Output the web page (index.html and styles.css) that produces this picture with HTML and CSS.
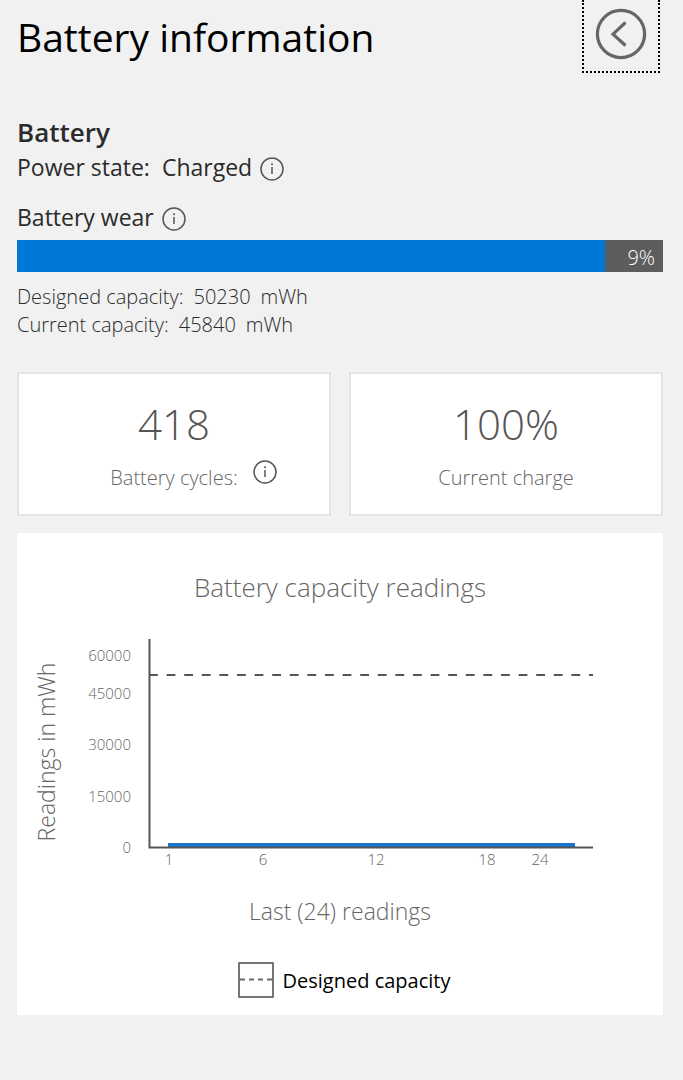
FILE: index.html
```html
<!DOCTYPE html>
<html lang="en">
<head>
<meta charset="utf-8">
<meta name="viewport" content="width=device-width, initial-scale=1">
<title>Battery information</title>
<link rel="stylesheet" href="styles.css">
</head>
<body>

<!-- info icon, used by every info button -->
<svg class="defs" width="0" height="0" aria-hidden="true">
  <symbol id="info" viewBox="0 0 24 24">
    <circle cx="12" cy="12" r="11" fill="none" stroke="currentColor" stroke-width="1.5"/>
    <path d="M12 10v7" stroke="currentColor" stroke-width="1.5"/>
    <circle cx="12" cy="7.3" r="1" fill="currentColor"/>
  </symbol>
</svg>

<header class="header">
  <h1>Battery information</h1>
  <button type="button" class="back" aria-label="Back">
    <svg width="52" height="52" viewBox="0 0 52 52" fill="none" stroke="#666" stroke-width="3.2">
      <circle cx="26" cy="26" r="23.6"/>
      <path d="M30.500 14.500L18 26.200L30.500 37.500"/>
    </svg>
  </button>
</header>

<main>
  <section class="battery">
    <h2>Battery</h2>
    <div class="row">
      <span>Power state:</span>
      <span class="value">Charged</span>
      <button type="button" class="info" aria-label="About power state"><svg><use href="#info"/></svg></button>
    </div>
    <div class="row wear">
      <span>Battery wear</span>
      <button type="button" class="info" aria-label="About battery wear"><svg><use href="#info"/></svg></button>
    </div>
    <div class="bar">
      <div class="fill" style="width:91%"></div>
      <span class="percent">9%</span>
    </div>
    <div class="capacity">
      <div><span>Designed capacity:</span><span>50230</span><span>mWh</span></div>
      <div><span>Current capacity:</span><span>45840</span><span>mWh</span></div>
    </div>
  </section>

  <section class="cards">
    <div class="card">
      <div class="number">418</div>
      <div class="label cycles">
        <span>Battery cycles:</span>
        <button type="button" class="info" aria-label="About battery cycles"><svg><use href="#info"/></svg></button>
      </div>
    </div>
    <div class="card">
      <div class="number">100%</div>
      <div class="label">Current charge</div>
    </div>
  </section>

  <section class="chart">
    <h3>Battery capacity readings</h3>
    <svg class="plot" viewBox="0 0 646 260">
      <text class="title" text-anchor="middle" transform="translate(38 132) rotate(-90)">Readings in mWh</text>

      <g class="tick" text-anchor="end">
        <text x="114" y="41">60000</text>
        <text x="114" y="79">45000</text>
        <text x="114" y="130">30000</text>
        <text x="114" y="182">15000</text>
        <text x="114" y="233">0</text>
      </g>

      <path class="designed" d="M132 55H576"/>
      <path class="readings" d="M151 225H558"/>
      <path class="axis" d="M132.500 19V227.500H576"/>

      <g class="tick" text-anchor="middle">
        <text x="152" y="245">1</text>
        <text x="246" y="245">6</text>
        <text x="359" y="245">12</text>
        <text x="470" y="245">18</text>
        <text x="523" y="245">24</text>
      </g>
    </svg>
    <p class="caption">Last (24) readings</p>
    <div class="legend">
      <svg width="36" height="36" viewBox="0 0 36 36" fill="none" stroke="#666">
        <rect x="1" y="1" width="34" height="34" stroke-width="1.8"/>
        <path d="M2 17.500H34" stroke-width="2" stroke-dasharray="5 4"/>
      </svg>
      <span>Designed capacity</span>
    </div>
  </section>
</main>

</body>
</html>
```
FILE: styles.css
```css
* {
  box-sizing: border-box;
}

body {
  margin: 0;
  padding: 0 20px 64px 17px;
  background: #f1f1f1;
  color: #2b2b2b;
  font-family: "Segoe UI", "Open Sans", "Noto Sans", sans-serif;
}

h1, h2, h3, p {
  margin: 0;
}

button {
  padding: 0;
  border: none;
  background: none;
  cursor: pointer;
}

.defs {
  position: absolute;
}

/* Header */
.header {
  display: flex;
  justify-content: space-between;
  padding-right: 3px;
}

h1 {
  color: #000;
  font-size: 39px;
  font-weight: 400;
  line-height: 74px;
}

.back {
  display: flex;
  justify-content: center;
  width: 78px;
  height: 73px;
  padding-top: 8px;
  border: 2px dotted #000;
  border-top: none;
}

/* Battery state */
.battery {
  padding-top: 41px;
}

h2 {
  font-size: 26px;
  font-weight: 600;
  line-height: 35px;
}

.row {
  display: flex;
  align-items: center;
  gap: 8px;
  font-size: 23px;
  line-height: 34px;
}

.row .value {
  margin-left: 4px;
}

.wear {
  margin-top: 16px;
}

.info {
  display: flex;
  color: #555;
}

.info svg {
  width: 24px;
  height: 24px;
}

.row .info {
  margin-top: 4px;
}

.bar {
  display: flex;
  height: 32px;
  margin-top: 6px;
  background: #5d5d5d;
}

.fill {
  background: #0078d7;
}

.percent {
  flex: 1;
  padding-right: 8px;
  color: #fff;
  font-size: 20px;
  font-weight: 300;
  line-height: 36px;
  text-align: right;
}

.capacity {
  margin-top: 11px;
  font-size: 20px;
  font-weight: 300;
  line-height: 28px;
}

.capacity div {
  display: flex;
  gap: 10px;
}

/* Cards */
.cards {
  display: grid;
  grid-template-columns: 1fr 1fr;
  gap: 18px;
  margin-top: 33px;
}

.card {
  height: 144px;
  padding-top: 20px;
  background: #fff;
  border: 2px solid #e5e5e5;
  color: #555;
  font-weight: 300;
  text-align: center;
}

.number {
  font-size: 42px;
  line-height: 60px;
}

.label {
  color: #666;
  font-size: 20px;
  line-height: 48px;
}

.cycles {
  position: relative;
}

/* the info button hangs beside the centred label */
.cycles .info {
  position: absolute;
  top: 6px;
  left: calc(50% + 79px);
}

/* Chart */
.chart {
  margin-top: 17px;
  padding: 32px 0 17px;
  background: #fff;
  color: #666;
  font-weight: 300;
  text-align: center;
}

h3 {
  font-size: 26px;
  font-weight: 300;
  line-height: 44px;
}

.plot {
  display: block;
  width: 100%;
  margin-top: 11px;
}

.plot text {
  fill: #666;
}

.plot .title {
  font-size: 23px;
}

.tick {
  font-size: 15px;
}

.axis,
.designed,
.readings {
  fill: none;
  stroke: #555;
  stroke-width: 2;
}

.designed {
  stroke-dasharray: 8.800 8.800;
}

.readings {
  stroke: #1a75cf;
  stroke-width: 4;
}

.caption {
  margin-top: 14px;
  font-size: 23px;
  line-height: 34px;
}

.legend {
  display: flex;
  align-items: center;
  justify-content: center;
  gap: 9px;
  margin-top: 34px;
  padding-left: 8px;
  color: #000;
  font-size: 20px;
  font-weight: 400;
}
```
